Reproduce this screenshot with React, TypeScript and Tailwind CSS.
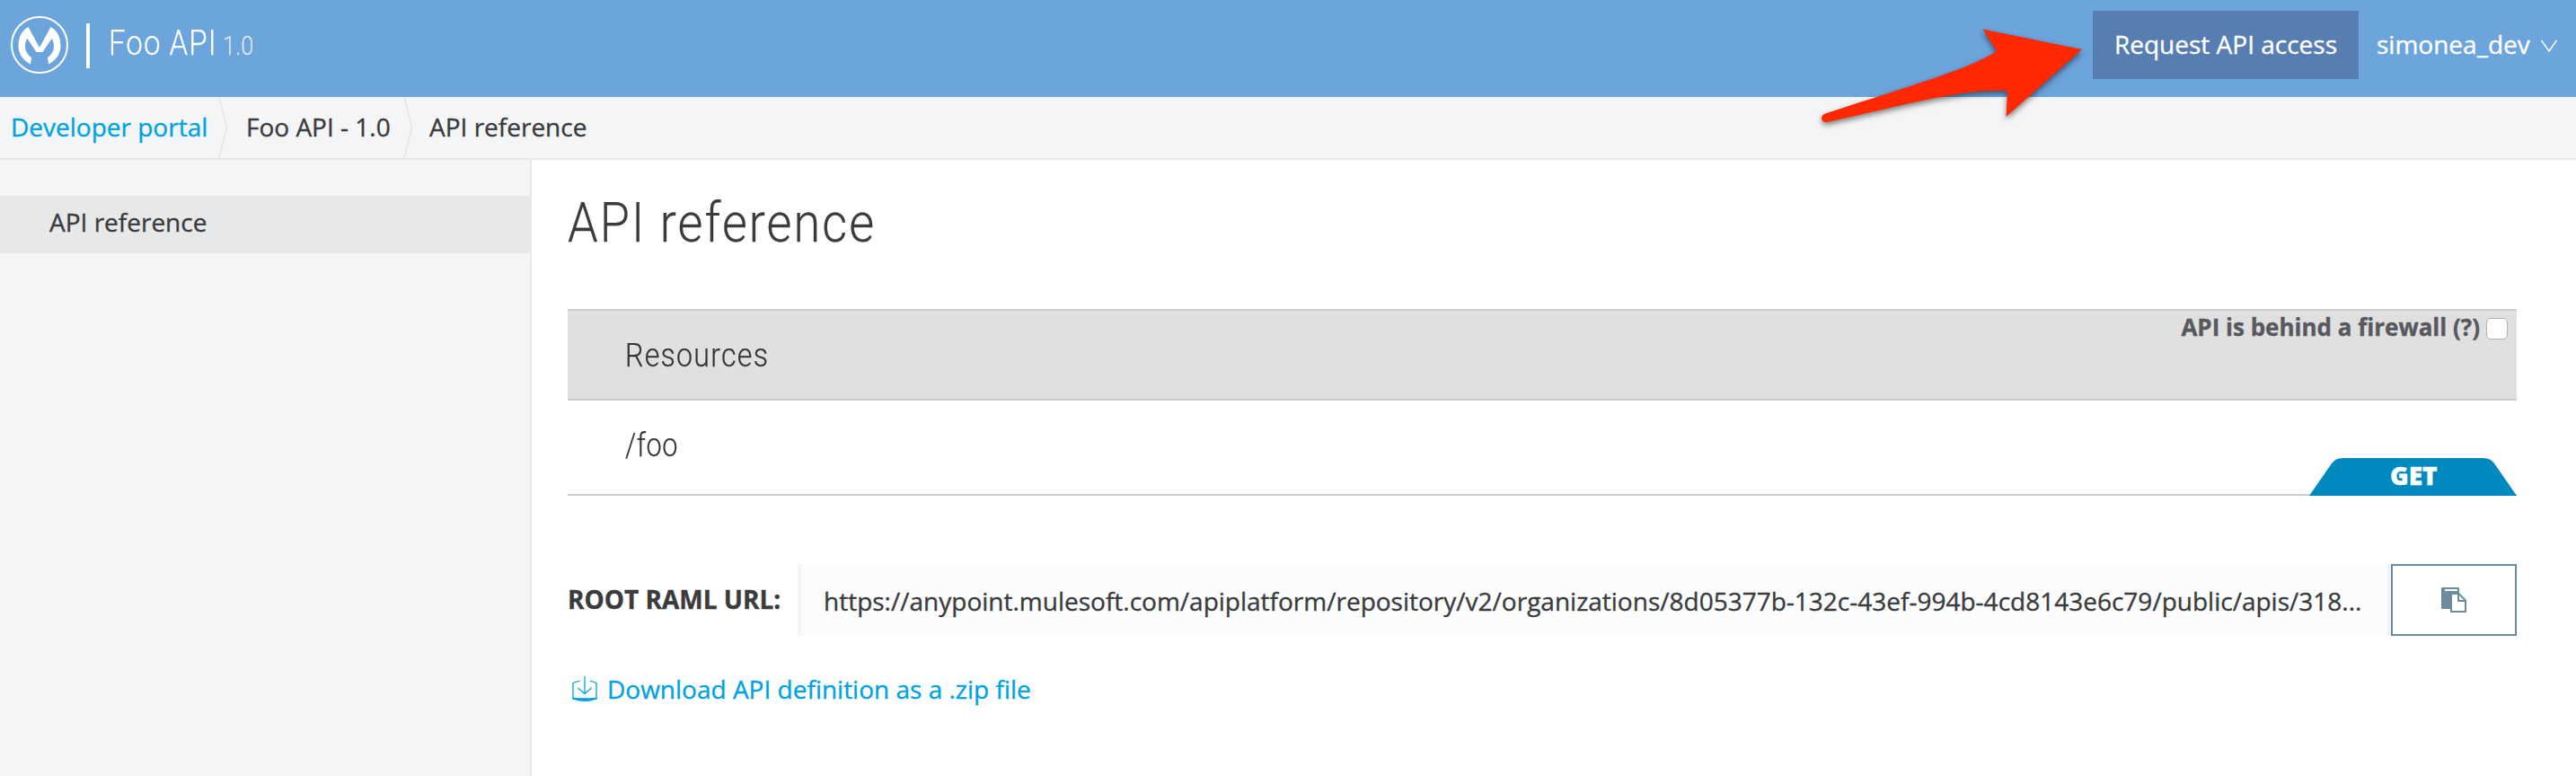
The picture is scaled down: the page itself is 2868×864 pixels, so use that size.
const din = "font-['Roboto',sans-serif] font-light whitespace-nowrap origin-left [-webkit-text-stroke:0.25px]";

function Crumb({ children, link }: { children: string; link?: boolean }) {
  return <span className={link ? "text-[#00a2df]" : ""}>{children}</span>;
}

function CrumbArrow() {
  return (
    <svg width="12" height="68" viewBox="0 0 12 68" fill="none" stroke="#e7e8ea" strokeWidth="2">
      <path d="M1 0L9.500 34L1 68" />
    </svg>
  );
}

export default function App() {
  return (
    <div className="relative flex h-[864px] w-[2868px] flex-col overflow-hidden bg-white font-['Open_Sans',sans-serif] text-[28px] leading-[38px] text-[#3a3b3c] [-webkit-text-stroke:0.35px]">
      <header className="flex h-[108px] shrink-0 items-start justify-between bg-[#6ca4dc] text-white">
        <div className="flex">
          <svg className="mt-[18px] ml-3" width="64" height="64" viewBox="0 0 64 64">
            <circle cx="32" cy="32" r="31" fill="none" stroke="#fff" strokeWidth="2" />
            <path fill="#fff" d="M19.500 12L32 35L44.500 12C52 16 55.500 24 55.500 33C55.500 42 50.500 49 42 53.500L41 46C45.500 43 48 38.500 48 33C48 29.500 47 27 45.500 25L35.500 40H28.500L18.500 25C17 27 16 29.500 16 33C16 38.500 18.500 43 23 46L22 53.500C13.500 49 8.500 42 8.500 33C8.500 24 12 16 19.500 12Z" />
          </svg>
          <div className="mt-[26px] ml-5 h-[50px] w-1 bg-white" />
          <div className="mt-[25px] ml-[21px] flex items-baseline leading-[46px]">
            <span className={`${din} w-[127px] scale-x-[0.87] text-[38px] tracking-[1.2px]`}>Foo API</span>
            <span className={`${din} scale-x-[0.85] text-[30px] text-[#e2e6ec]`}>1.0</span>
          </div>
        </div>
        <div className="flex">
          <button className="mt-3 h-[76px] w-[296px] bg-[#577eb0] pb-[2px] font-normal whitespace-nowrap">Request API access</button>
          <div className="mt-[30px] ml-5 flex w-[222px]">
            <span className="w-[183px]">simonea_dev</span>
            <svg className="mt-[14px]" width="18" height="15" viewBox="0 0 18 15" fill="none" stroke="#fff" strokeWidth="1.500">
              <path d="M0.500 1L9 13L17.500 1" />
            </svg>
          </div>
        </div>
      </header>

      <nav className="flex h-[70px] shrink-0 border-b-2 border-[#e7e8ea] bg-[#f4f5f7] pl-3 leading-[67px] whitespace-nowrap">
        <div className="w-[231px]"><Crumb link>Developer portal</Crumb></div>
        <CrumbArrow />
        <div className="w-[194px] pl-[19px]"><Crumb>Foo API - 1.0</Crumb></div>
        <CrumbArrow />
        <div className="pl-[17px]"><Crumb>API reference</Crumb></div>
      </nav>

      <div className="flex flex-1">
        <aside className="w-[592px] shrink-0 border-r-2 border-[#e7e8ea] bg-[#f4f5f7] pt-10">
          <div className="h-16 bg-[#e7e8ea] pl-[55px] leading-[59px]">API reference</div>
        </aside>
        <main className="w-[2210px] pl-10">
          <h1 className={`${din} mt-[28px] h-[82px] scale-x-[0.87] text-[62px] leading-[84px] tracking-[2.4px]`}>API reference</h1>
          <section className="mt-[56px]">
            <div className="flex h-[102px] justify-between border-y-2 border-[#ccc] bg-[#e0e0e0]">
              <h2 className={`${din} ml-16 scale-x-[0.87] text-[37px] leading-[99px] tracking-[1.4px] text-[#333]`}>Resources</h2>
              <label className="flex pr-[10px] text-[26px] leading-[36px] font-bold text-[#58585f]">
                API is behind a firewall (?)
                <span className="mt-2 ml-[7px] h-6 w-6 rounded-[5px] border border-[#b0b0b0] bg-white" />
              </label>
            </div>
            <div className="flex h-[106px] justify-between border-b-2 border-[#ccc]">
              <span className={`${din} ml-16 scale-x-[0.83] text-[37px] leading-[99px] tracking-[0.700px] text-[#333]`}>/foo</span>
              <div className="relative mt-16 h-[42px] w-[231px]">
                <svg className="absolute inset-0" width="231" height="42" viewBox="0 0 231 42">
                  <path fill="#0089be" d="M0 42L25 6Q29 0 37 0H194Q202 0 206 6L231 42Z" />
                </svg>
                <span className="relative block pl-[90px] leading-[39px] font-extrabold text-white">GET</span>
              </div>
            </div>
          </section>
          <section className="mt-[76px] flex h-20">
            <div className="w-[256px] leading-[78px] font-bold whitespace-nowrap">ROOT RAML URL:</div>
            <div className="w-[1774px] border-x-4 border-l-[#f4f5f6] border-r-[#f1f4f8] bg-[#fbfdfc] pl-[25px] leading-[82px] whitespace-nowrap">
              https://anypoint.mulesoft.com/apiplatform/repository/v2/organizations/8d05377b-132c-43ef-994b-4cd8143e6c79/public/apis/318...
            </div>
            <button className="flex w-[140px] items-center justify-center border-2 border-[#6a8c9c]">
              <svg width="28" height="28" viewBox="0 0 28 28">
                <path fill="#6a8c9c" d="M1 0H19Q20 0 20 1V7H14Q10 7 10 10V24H1Q0 24 0 23V1Q0 0 1 0Z" />
                <path fill="#fff" d="M4 2H18V4H4Z" />
                <path fill="#fff" stroke="#6a8c9c" strokeWidth="2" d="M11 7H19.500L27 14.500V27H11Z" />
                <path fill="none" stroke="#6a8c9c" strokeWidth="2" d="M19 7V15H27" />
              </svg>
            </button>
          </section>
          <a className="mt-[40px] flex items-center text-[#00a2df]">
            <svg className="ml-[5px]" width="28" height="28" viewBox="0 0 28 28" fill="none" stroke="#00a2df" strokeWidth="1.300">
              <path d="M8.500 5L1 7.500V25H27V7.500L20 5M14 0V19.500M6.500 13L14 19.500L21.500 13" />
              <path fill="#00a2df" stroke="none" d="M0.500 23.500Q14 26 27.500 23.500V25Q22 28 14 28Q6 28 0.500 25Z" />
            </svg>
            <span className="ml-[11px]">Download API definition as a .zip file</span>
          </a>
        </main>
      </div>

      <svg className="absolute top-0 left-[2000px] drop-shadow-[0_3px_3px_rgba(0,0,0,0.5)]" width="340" height="160" viewBox="0 0 340 160">
        <path fill="#ff2800" d="M318 55L207.500 32.500L223 57C193 76 145 90 32 126.500C26 129 27 137 34 136C118 118 185 98 235 101.500L233.500 130Z" />
      </svg>
    </div>
  );
}
